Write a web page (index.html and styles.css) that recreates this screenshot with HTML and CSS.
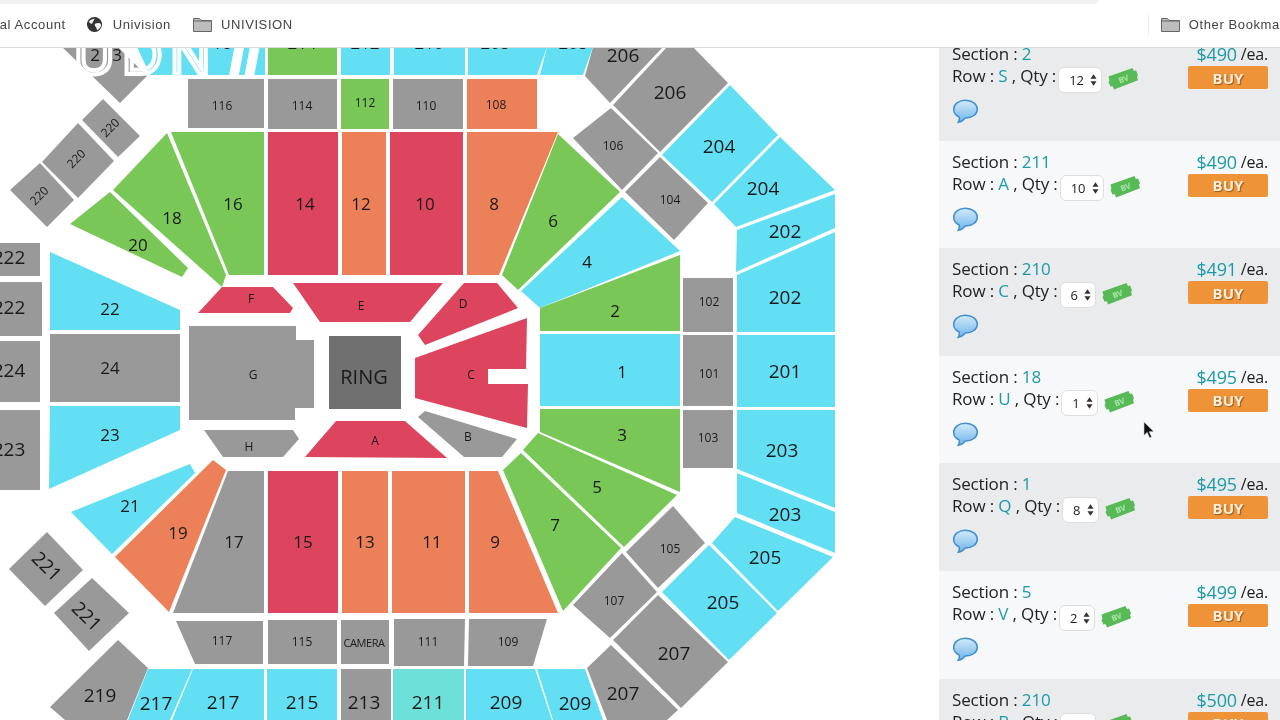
FILE: index.html
```html
<!DOCTYPE html>
<html lang="en">
<head>
<meta charset="utf-8">
<title>Seat map</title>
<link rel="stylesheet" href="styles.css">
</head>
<body>
<svg class="defs" aria-hidden="true">
  <defs>
    <linearGradient id="bubbleFill" x1="0" y1="0" x2="0" y2="1">
      <stop offset="0" stop-color="#d4ebfa"/>
      <stop offset="1" stop-color="#6db3ea"/>
    </linearGradient>
  </defs>
  <symbol id="bubble" viewBox="0 0 26 25">
    <path d="M13 1.2C6.2 1.2 1.2 5.2 1.2 10.2c0 3.6 2.4 6.4 5.6 7.9.3 1.6-.2 3.6-1.1 5.2 2.8-.4 5.3-2 6.8-4.2h.5c6.8 0 11.800-4 11.800-8.900S19.800 1.200 13 1.200z" fill="url(#bubbleFill)" stroke="#3f8fd0" stroke-width="1.500"/>
  </symbol>
  <symbol id="ticket" viewBox="0 0 30 22">
    <path d="M.5 8.500 24.500 0l1.300 2.800c.9.300 1.600 0 2.200-.5L30 7.500c-.8.500-1.100 1.300-.7 2.200l.7 2.600L6 21.500l-1-2.800c-.9-.5-1.700-.4-2.400.1L.5 14c.8-.6 1.100-1.500.8-2.300z" fill="#58b957"/>
    <text x="15.500" y="14" class="ticket-text" transform="rotate(-20 15.500 11)">BV</text>
  </symbol>
</svg>

<header class="topbar">
  <div class="omnibox-edge"></div>
  <nav class="bookmarks">
    <span class="bm bm-clip">Personal Account</span>
    <span class="bm bm-gap">
      <svg class="globe" viewBox="0 0 18 18"><circle cx="9" cy="9" r="8" fill="#333"/><path d="M3 6c2-2 4-3 6-3 0 2-2 2-2 4s-3 1-4-1zM10 8c2-1 5-1 6 1 0 3-2 5-4 6-1-2-1-3-2-4s-1-2 0-3z" fill="#f4f4f4"/></svg>
      Univision
    </span>
    <span class="bm bm-gap2">
      <svg class="folder" viewBox="0 0 19 16"><path d="M.5 14.500V1.500h6l1.500 2h10.500v11z" fill="#bdbdbd" stroke="#666"/><path d="M.5 4h18" stroke="#666"/></svg>
      UNIVISION
    </span>
    <span class="bm-spacer"></span>
    <span class="bm-divider"></span>
    <span class="bm bm-other">
      <svg class="folder" viewBox="0 0 19 16"><path d="M.5 14.500V1.500h6l1.500 2h10.500v11z" fill="#bdbdbd" stroke="#666"/><path d="M.5 4h18" stroke="#666"/></svg>
      Other Bookmarks
    </span>
  </nav>
</header>

<main class="page">
  <svg class="map" viewBox="0 47 939 673">
    <g class="grey">
      <polygon points="62,47 120,103 147,76 118,47"/>
      <polygon points="103,99 140,136 118,157 82,120"/>
      <polygon points="78,123 114,161 78,198 42,162"/>
      <polygon points="40,163 74,200 47,227 10,190"/>
      <polygon points="188,79 264,79 264,128 188,128"/>
      <polygon points="268,79 337,79 337,129 268,129"/>
      <polygon points="393,79 463,79 463,129 393,129"/>
      <polygon points="0,243 40,243 40,276 0,276"/>
      <polygon points="0,282 42,282 42,336 0,336"/>
      <polygon points="0,341 40,341 40,402 0,402"/>
      <polygon points="0,410 40,410 40,490 0,490"/>
      <polygon points="50,334 180,334 180,402 50,402"/>
      <polygon points="189,326 296,326 296,340 314,340 314,408 295,408 295,420 189,420"/>
      <polygon points="204,430 293,430 299,439 283,457 223,457"/>
      <polygon points="425,411 517,439 502,457 464,457 418,417"/>
      <polygon points="228,471 264,471 264,613 173,613"/>
      <polygon points="573,138 611,108 658,153 622,190"/>
      <polygon points="625,192 660,157 708,203 674,240"/>
      <polygon points="613,105 667,47 693,47 728,83 660,152"/>
      <polygon points="585,76 593,47 663,47 610,103"/>
      <polygon points="683,278 733,278 733,332 683,332"/>
      <polygon points="683,335 733,335 733,406 683,406"/>
      <polygon points="683,410 733,410 733,468 683,468"/>
      <polygon points="673,506 705,543 658,588 626,552"/>
      <polygon points="622,553 657,592 610,638 573,605"/>
      <polygon points="658,595 728,662 681,708 613,640"/>
      <polygon points="611,645 678,710 667,720 607,720 587,668"/>
      <polygon points="47,532 83,570 45,606 9,569"/>
      <polygon points="92,578 129,613 89,651 54,613"/>
      <polygon points="118,640 148,668 127,720 65,720 50,707"/>
      <polygon points="176,621 263,621 263,664 195,664"/>
      <polygon points="268,620 337,620 337,664 268,664"/>
      <polygon points="341,620 389,620 389,664 341,664"/>
      <polygon points="394,619 465,619 464,666 394,666"/>
      <polygon points="469,619 547,619 533,666 468,666"/>
      <polygon points="341,669 391,669 391,720 341,720"/>
    </g>
    <polygon class="ring" points="329,336 401,336 401,409 329,409"/>
    <g class="blue">
      <polygon points="137,47 265,47 265,75 150,75"/>
      <polygon points="341,47 390,47 390,75 341,75"/>
      <polygon points="394,47 465,47 465,75 394,75"/>
      <polygon points="468,47 547,47 537,75 468,75"/>
      <polygon points="547,47 593,47 583,75 540,75"/>
      <polygon points="50,252 180,310 180,330 50,330"/>
      <polygon points="50,406 180,406 180,430 49,489"/>
      <polygon points="71,512 190,464 195,473 112,554"/>
      <polygon points="521,291 622,197 680,251 540,308"/>
      <polygon points="540,334 680,334 680,406 540,406"/>
      <polygon points="730,85 778,135 712,202 662,155"/>
      <polygon points="780,137 835,190 736,227 714,204"/>
      <polygon points="835,194 835,228 736,272 737,230"/>
      <polygon points="835,232 835,332 737,332 737,275"/>
      <polygon points="737,335 835,335 835,407 737,407"/>
      <polygon points="737,410 835,410 835,508 737,469"/>
      <polygon points="737,473 835,512 835,553 737,513"/>
      <polygon points="735,517 833,557 778,611 712,543"/>
      <polygon points="709,545 777,613 729,660 662,592"/>
      <polygon points="537,669 585,669 603,720 553,720"/>
      <polygon points="466,669 535,669 552,720 466,720"/>
      <polygon points="267,669 337,669 337,720 267,720"/>
      <polygon points="193,669 264,669 264,720 172,720"/>
      <polygon points="148,669 192,669 170,720 128,720"/>
    </g>
    <polygon class="teal" points="393,669 464,669 464,720 393,720"/>
    <g class="green">
      <polygon points="268,47 337,47 337,75 268,75"/>
      <polygon points="341,79 389,79 389,129 341,129"/>
      <polygon points="171,132 264,132 264,275 229,275"/>
      <polygon points="167,133 226,275 222,287 113,190"/>
      <polygon points="110,192 188,268 182,277 70,224"/>
      <polygon points="558,134 620,192 518,290 502,275"/>
      <polygon points="540,308 680,255 680,331 540,331"/>
      <polygon points="540,409 680,409 680,492 540,432"/>
      <polygon points="538,433 677,495 624,547 523,450"/>
      <polygon points="521,453 621,548 563,611 503,470"/>
    </g>
    <g class="red">
      <polygon points="268,132 338,132 338,275 268,275"/>
      <polygon points="390,132 463,132 463,275 390,275"/>
      <polygon points="198,313 222,287 273,287 293,308 290,313"/>
      <polygon points="293,283 443,283 410,322 320,322"/>
      <polygon points="464,283 497,283 518,308 425,345 418,335"/>
      <polygon points="415,358 527,318 526,369 488,369 488,384 528,384 527,428 415,398"/>
      <polygon points="336,421 405,421 447,458 305,457"/>
      <polygon points="268,471 338,471 338,613 268,613"/>
    </g>
    <g class="orange">
      <polygon points="467,79 537,79 537,129 467,129"/>
      <polygon points="342,132 386,132 386,275 342,275"/>
      <polygon points="467,132 558,132 499,275 467,275"/>
      <polygon points="115,557 213,460 226,470 169,612"/>
      <polygon points="342,471 388,471 388,613 342,613"/>
      <polygon points="392,471 465,471 465,613 392,613"/>
      <polygon points="469,471 498,471 558,613 469,613"/>
    </g>

    <g class="lbl-m" transform="translate(0,-1)">
      <text x="95" y="55">2</text><text x="117" y="55">3</text>
      <text x="222" y="43">16</text><text x="302" y="43">214</text><text x="365" y="43">212</text><text x="429" y="43">210</text><text x="495" y="43">208</text><text x="573" y="43">208</text>
      <text x="233" y="204">16</text><text x="172" y="218">18</text><text x="138" y="245">20</text><text x="305" y="204">14</text><text x="361" y="204">12</text><text x="425" y="204">10</text><text x="494" y="204">8</text><text x="553" y="221">6</text><text x="587" y="262">4</text><text x="615" y="311">2</text><text x="622" y="372">1</text><text x="622" y="435">3</text><text x="597" y="487">5</text><text x="555" y="525">7</text><text x="495" y="542">9</text><text x="432" y="542">11</text><text x="365" y="542">13</text><text x="303" y="542">15</text><text x="234" y="542">17</text><text x="178" y="533">19</text><text x="130" y="506">21</text><text x="110" y="309">22</text><text x="110" y="368">24</text><text x="110" y="435">23</text>
    </g>
    <g class="lbl-l" transform="translate(0,-1)">
      <text x="9" y="258">222</text><text x="9" y="308">222</text><text x="9" y="371">224</text><text x="9" y="450">223</text>
      <text x="623" y="56">206</text><text x="670" y="93">206</text><text x="719" y="147">204</text><text x="763" y="189">204</text><text x="785" y="232">202</text><text x="785" y="298">202</text><text x="785" y="372">201</text><text x="782" y="451">203</text><text x="785" y="515">203</text><text x="765" y="558">205</text><text x="723" y="603">205</text><text x="674" y="654">207</text><text x="623" y="694">207</text><text x="575" y="704">209</text><text x="506" y="703">209</text><text x="428" y="703">211</text><text x="364" y="703">213</text><text x="302" y="703">215</text><text x="223" y="703">217</text><text x="156" y="704">217</text><text x="100" y="696">219</text>
      <text x="47" y="567" transform="rotate(45 47 567)">221</text><text x="87" y="617" transform="rotate(45 87 617)">221</text>
    </g>
    <g class="lbl-s" transform="translate(0,-.5)">
      <text x="222" y="106">116</text><text x="302" y="106">114</text><text x="365" y="103">112</text><text x="426" y="106">110</text><text x="496" y="105">108</text>
      <text x="613" y="146">106</text><text x="670" y="200">104</text><text x="709" y="302">102</text><text x="709" y="374">101</text><text x="708" y="438">103</text><text x="670" y="549">105</text><text x="614" y="601">107</text>
      <text x="222" y="641">117</text><text x="302" y="642">115</text><text x="428" y="642">111</text><text x="508" y="642">109</text>
      <text x="251" y="299">F</text><text x="361" y="306">E</text><text x="463" y="304">D</text><text x="253" y="375">G</text><text x="471" y="375">C</text><text x="249" y="447">H</text><text x="375" y="441">A</text><text x="468" y="437">B</text>
      <text x="110" y="128" transform="rotate(-45 110 128)">220</text><text x="76" y="159" transform="rotate(-45 76 159)">220</text><text x="39" y="196" transform="rotate(-45 39 196)">220</text>
    </g>
    <text class="lbl-cam" x="364" y="642">CAMERA</text>
    <text class="lbl-ring" x="364" y="376">RING</text>

    <text class="wm" x="74 122 170" y="74">UDN</text>
    <text class="wm-slash" x="230" y="74">//</text>
    <rect class="wm-t" x="36" y="47" width="2" height="25"/>
  </svg>

  <aside class="tickets">
    <article class="row">
      <div class="info">
        <p class="line">Section : <b class="hl">2</b></p>
        <p class="line line-qty"><span>Row : <b class="hl">S</b> , Qty :</span><span class="qty">12<svg class="spin" viewBox="0 0 8 13"><path d="M4 0l3.500 5h-7zM4 13L.5 8h7z"/></svg></span><svg class="tk"><use href="#ticket"/></svg></p>
        <svg class="bub"><use href="#bubble"/></svg>
      </div>
      <div class="buy-col"><p class="price"><b class="hl">$490</b> /ea.</p><button class="buy">BUY</button></div>
    </article>
    <article class="row">
      <div class="info">
        <p class="line">Section : <b class="hl">211</b></p>
        <p class="line line-qty"><span>Row : <b class="hl">A</b> , Qty :</span><span class="qty">10<svg class="spin" viewBox="0 0 8 13"><path d="M4 0l3.500 5h-7zM4 13L.5 8h7z"/></svg></span><svg class="tk"><use href="#ticket"/></svg></p>
        <svg class="bub"><use href="#bubble"/></svg>
      </div>
      <div class="buy-col"><p class="price"><b class="hl">$490</b> /ea.</p><button class="buy">BUY</button></div>
    </article>
    <article class="row">
      <div class="info">
        <p class="line">Section : <b class="hl">210</b></p>
        <p class="line line-qty"><span>Row : <b class="hl">C</b> , Qty :</span><span class="qty">6<svg class="spin" viewBox="0 0 8 13"><path d="M4 0l3.500 5h-7zM4 13L.5 8h7z"/></svg></span><svg class="tk"><use href="#ticket"/></svg></p>
        <svg class="bub"><use href="#bubble"/></svg>
      </div>
      <div class="buy-col"><p class="price"><b class="hl">$491</b> /ea.</p><button class="buy">BUY</button></div>
    </article>
    <article class="row">
      <div class="info">
        <p class="line">Section : <b class="hl">18</b></p>
        <p class="line line-qty"><span>Row : <b class="hl">U</b> , Qty :</span><span class="qty">1<svg class="spin" viewBox="0 0 8 13"><path d="M4 0l3.500 5h-7zM4 13L.5 8h7z"/></svg></span><svg class="tk"><use href="#ticket"/></svg></p>
        <svg class="bub"><use href="#bubble"/></svg>
      </div>
      <div class="buy-col"><p class="price"><b class="hl">$495</b> /ea.</p><button class="buy">BUY</button></div>
    </article>
    <article class="row">
      <div class="info">
        <p class="line">Section : <b class="hl">1</b></p>
        <p class="line line-qty"><span>Row : <b class="hl">Q</b> , Qty :</span><span class="qty">8<svg class="spin" viewBox="0 0 8 13"><path d="M4 0l3.500 5h-7zM4 13L.5 8h7z"/></svg></span><svg class="tk"><use href="#ticket"/></svg></p>
        <svg class="bub"><use href="#bubble"/></svg>
      </div>
      <div class="buy-col"><p class="price"><b class="hl">$495</b> /ea.</p><button class="buy">BUY</button></div>
    </article>
    <article class="row">
      <div class="info">
        <p class="line">Section : <b class="hl">5</b></p>
        <p class="line line-qty"><span>Row : <b class="hl">V</b> , Qty :</span><span class="qty">2<svg class="spin" viewBox="0 0 8 13"><path d="M4 0l3.500 5h-7zM4 13L.5 8h7z"/></svg></span><svg class="tk"><use href="#ticket"/></svg></p>
        <svg class="bub"><use href="#bubble"/></svg>
      </div>
      <div class="buy-col"><p class="price"><b class="hl">$499</b> /ea.</p><button class="buy">BUY</button></div>
    </article>
    <article class="row">
      <div class="info">
        <p class="line">Section : <b class="hl">210</b></p>
        <p class="line line-qty"><span>Row : <b class="hl">B</b> , Qty :</span><span class="qty">1<svg class="spin" viewBox="0 0 8 13"><path d="M4 0l3.500 5h-7zM4 13L.5 8h7z"/></svg></span><svg class="tk"><use href="#ticket"/></svg></p>
        <svg class="bub"><use href="#bubble"/></svg>
      </div>
      <div class="buy-col"><p class="price"><b class="hl">$500</b> /ea.</p><button class="buy">BUY</button></div>
    </article>
  </aside>
</main>

<svg class="cursor" viewBox="0 0 12 20"><path d="M1 1v15l3.600-3.400 2.600 6 2.300-1-2.600-5.800H12z" fill="#111" stroke="#fff" stroke-width=".6"/></svg>
</body>
</html>
```

FILE: styles.css
```css
* { box-sizing: border-box; }
html, body { margin: 0; height: 720px; overflow: hidden; background: #fff; }
body { position: relative; width: 1280px; font-family: "Open Sans", "Noto Sans", sans-serif; color: #1c1c1c; filter: blur(.35px); }
.defs { position: absolute; width: 0; height: 0; }

/* browser chrome */
.topbar { height: 48px; border-bottom: 1px solid #d9d9d9; background: #fff; display: flex; flex-direction: column; }
.omnibox-edge { width: 1098px; height: 4px; background: #f0f0f0; border-bottom-right-radius: 6px; }
.bookmarks { flex: 1; display: flex; align-items: center; padding-bottom: 2px; font-family: "Liberation Sans", sans-serif; font-size: 13px; letter-spacing: .6px; color: #444; overflow: hidden; white-space: nowrap; }
.bm { display: flex; align-items: center; }
.bm-clip { margin-left: -45px; }
.bm-gap { margin-left: 20px; gap: 10px; }
.bm-gap2 { margin-left: 22px; gap: 9px; }
.bm-spacer { flex: 1; }
.bm-divider { width: 1px; height: 20px; background: #eee; margin-right: 12px; }
.bm-other { gap: 9px; margin-right: -19px; }
.globe { width: 17px; height: 17px; }
.folder { width: 19px; height: 16px; flex: none; }

.page { height: 672px; display: flex; overflow: hidden; }

/* seat map */
.map { width: 939px; height: 673px; flex: none; margin-top: -1px; }
.grey { fill: #999; }
.ring { fill: #707070; }
.blue { fill: #62dff3; }
.teal { fill: #6ee0da; }
.green { fill: #79c757; }
.red { fill: #dc455d; }
.orange { fill: #ec8058; }
.map text { text-anchor: middle; dominant-baseline: central; fill: #1a1a1a; font-family: "Open Sans", sans-serif; }
.lbl-m { font-size: 17px; }
.lbl-l { font-size: 19px; }
.lbl-s { font-size: 12px; }
.map .lbl-cam { font-size: 11px; letter-spacing: -.4px; }
.map .lbl-ring { font-size: 20px; }
.map .wm { font-family: "Liberation Sans", sans-serif; font-size: 56px; fill: none; stroke: #fff; stroke-width: 4px; text-anchor: start; dominant-baseline: auto; }
.map .wm-slash { font-family: "Liberation Sans", sans-serif; font-size: 56px; font-weight: 700; fill: #fff; stroke: #fff; stroke-width: 3px; text-anchor: start; dominant-baseline: auto; }
.wm-t { fill: #fff; opacity: .7; }

/* ticket list */
.tickets { flex: 1; min-width: 0; display: flex; flex-direction: column; margin-top: -15px; }
.row { flex: none; height: 107.6px; padding: 10px 12px 0 13px; display: flex; justify-content: space-between; background: #f6f8fa; }
.row:nth-child(odd) { background: #e9ebed; }
.line { margin: 0; font-size: 17px; line-height: 22px; letter-spacing: -.15px; white-space: nowrap; color: #222; }
.line-qty { height: 22px; display: flex; align-items: flex-start; gap: 2px; white-space: pre; }
.hl { font-weight: 400; color: #1b9aa8; }
.qty { flex: none; margin-top: 2px; height: 26px; padding: 0 4px 0 10px; display: inline-flex; align-items: center; gap: 6px; font-size: 13px; letter-spacing: 0; background: #fff; border: 1px solid #dedede; border-radius: 6px; }
.spin { width: 7px; height: 12px; fill: #333; flex: none; }
.tk { flex: none; width: 30px; height: 22px; margin: 3px 0 0 4px; }
.ticket-text { font-size: 8px; font-weight: 700; fill: #a8e6a8; text-anchor: middle; font-family: "Open Sans", sans-serif; }
.bub { display: block; width: 27px; height: 25px; margin-top: 12px; }
.buy-col { width: 80px; display: flex; flex-direction: column; align-items: stretch; }
.price { margin: 0; text-align: right; font-size: 16px; line-height: 22px; letter-spacing: -.2px; white-space: nowrap; display: flex; justify-content: flex-end; gap: 4px; }
.price .hl { font-size: 18px; }
.buy { height: 23px; margin-top: 1px; padding: 0; border: 0; border-radius: 2px; background: #ee9337; color: #fbeedd; font: 700 15px "Open Sans", sans-serif; text-shadow: 1px 1px 1px #9a5a1a; }

.cursor { position: absolute; left: 1143px; top: 420px; width: 11px; height: 20px; }
```
